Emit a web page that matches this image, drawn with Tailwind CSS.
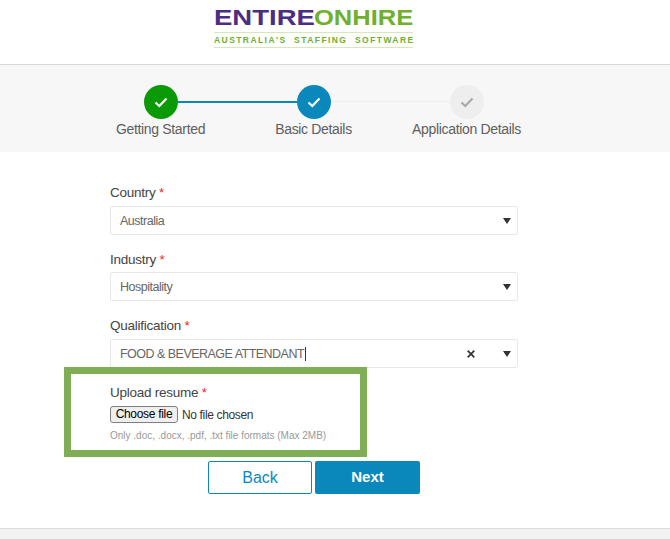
<!DOCTYPE html>
<html><head><meta charset="utf-8"><script src="https://cdn.jsdelivr.net/npm/@tailwindcss/browser@4"></script></head>
<body class="bg-white font-['Liberation_Sans',Arial,sans-serif] text-[#444]">
<div class="relative w-[670px] h-[539px] overflow-hidden flex flex-col">
  <header class="h-[65px] shrink-0 border-b border-[#d9d9d9] flex justify-center pr-[43px]">
    <div class="w-[199px] mt-[10px] flex flex-col items-stretch">
      <div class="h-[16px] flex leading-[16px] text-[22px] font-bold whitespace-nowrap"><span class="w-[100px] text-[#4b2d83] inline-block origin-left scale-x-[1.25]">ENTIRE</span><span class="text-[#6fb02c] inline-block origin-left scale-x-[1.16]">ONHIRE</span></div>
      <div class="mt-[6px] h-[16px] border-y border-[#d5e9bb] text-[#6fb02c] text-[8.5px] leading-[14px] font-bold tracking-[1.43px] whitespace-nowrap text-center">AUSTRALIA'S&nbsp; STAFFING&nbsp; SOFTWARE</div>
    </div>
  </header>
  <section class="h-[87px] shrink-0 bg-[#f7f7f7] pt-[20px] pl-[84px]">
    <div class="flex w-[459px]">
      <div class="w-[153px] flex flex-col items-center relative">
        <div class="absolute left-[76px] top-[16px] w-[153px] h-[2px] bg-[#0a88bc]"></div>
        <div class="relative size-[34px] rounded-full bg-[#0a9a06] flex items-center justify-center">
          <svg class="size-[14px]" viewBox="0 0 14 14" fill="none" stroke="#fff" stroke-width="2.2"><path d="M1.5 7.5 5.3 11 12.5 3.5"/></svg>
        </div>
        <div class="text-[14px] tracking-[-0.33px] leading-[20px] text-[#5e5e5e] whitespace-nowrap">Getting Started</div>
      </div>
      <div class="w-[153px] flex flex-col items-center relative">
        <div class="absolute left-[76px] top-[16px] w-[153px] h-[1px] bg-[#eeeeee]"></div>
        <div class="relative size-[34px] rounded-full bg-[#0a88bc] flex items-center justify-center">
          <svg class="size-[14px]" viewBox="0 0 14 14" fill="none" stroke="#fff" stroke-width="2.2"><path d="M1.5 7.5 5.3 11 12.5 3.5"/></svg>
        </div>
        <div class="text-[14px] tracking-[-0.33px] leading-[20px] text-[#5e5e5e] whitespace-nowrap">Basic Details</div>
      </div>
      <div class="w-[153px] flex flex-col items-center relative">
        <div class="relative size-[34px] rounded-full bg-[#eeeeee] flex items-center justify-center">
          <svg class="size-[14px]" viewBox="0 0 14 14" fill="none" stroke="#aaa" stroke-width="2.2"><path d="M1.5 7.5 5.3 11 12.5 3.5"/></svg>
        </div>
        <div class="text-[14px] tracking-[-0.33px] leading-[20px] text-[#5e5e5e] whitespace-nowrap">Application Details</div>
      </div>
    </div>
  </section>
  <main class="flex-1 pl-[110px] pt-[32px]">
    <div class="w-[408px] flex flex-col">
      <label class="text-[13.5px] tracking-[-0.25px] leading-[18px] text-[#444]">Country <span class="text-[#e8262a]">*</span></label>
      <div class="mt-[4px] h-[29px] border border-[#e8e8e8] rounded-[2px] flex items-center pl-[9px] pr-[6px] text-[12.5px] tracking-[-0.5px] text-[#666]">
        <span class="flex-1 pt-[1px]">Australia</span>
        <svg class="w-[8px] h-[6px]" viewBox="0 0 8 6" fill="#333"><path d="M0 0h8L4 6z"/></svg>
      </div>
      <label class="mt-[16px] text-[13.5px] tracking-[-0.25px] leading-[18px] text-[#444]">Industry <span class="text-[#e8262a]">*</span></label>
      <div class="mt-[3px] h-[29px] border border-[#e8e8e8] rounded-[2px] flex items-center pl-[9px] pr-[6px] text-[12.5px] tracking-[-0.5px] text-[#666]">
        <span class="flex-1 pt-[1px]">Hospitality</span>
        <svg class="w-[8px] h-[6px]" viewBox="0 0 8 6" fill="#333"><path d="M0 0h8L4 6z"/></svg>
      </div>
      <label class="mt-[16px] text-[13.5px] tracking-[-0.25px] leading-[18px] text-[#444]">Qualification <span class="text-[#e8262a]">*</span></label>
      <div class="mt-[4px] h-[29px] border border-[#e8e8e8] rounded-[2px] flex items-center pl-[9px] pr-[6px] text-[12.5px] tracking-[-0.52px] text-[#666]">
        <span class="flex-1 pt-[1px]"><span class="border-r border-[#333] pr-[0.5px]">FOOD &amp; BEVERAGE ATTENDANT</span></span>
        <svg class="w-[8px] h-[8px] mr-[28px]" viewBox="0 0 8 8" fill="none" stroke="#333" stroke-width="1.7"><path d="M.7.7l6.6 6.6M7.3.7.7 7.3"/></svg>
        <svg class="w-[8px] h-[6px]" viewBox="0 0 8 6" fill="#333"><path d="M0 0h8L4 6z"/></svg>
      </div>
      <label class="mt-[16px] text-[13.5px] tracking-[-0.25px] leading-[18px] text-[#444]">Upload resume <span class="text-[#e8262a]">*</span></label>
      <div class="mt-[4px] flex items-center h-[17px] text-[12px] tracking-[-0.35px] text-[#333]">
        <button class="w-[68px] h-[17px] bg-[#efefef] border border-[#808080] rounded-[3px] text-[12px] tracking-[-0.3px] leading-[15px] text-black">Choose file</button>
        <span class="ml-[4px]">No file chosen</span>
      </div>
      <p class="mt-[6px] text-[10px] leading-[14px] text-[#999]">Only .doc, .docx, .pdf, .txt file formats (Max 2MB)</p>
      <div class="mt-[18px] ml-[98px] flex gap-[3px]">
        <button class="w-[104px] h-[33px] bg-white border border-[#0a88bc] rounded-[2px] text-[16px] text-[#0a88bc]">Back</button>
        <button class="w-[105px] h-[33px] bg-[#0a88bc] rounded-[2px] text-[15px] font-bold text-white">Next</button>
      </div>
    </div>
  </main>
  <footer class="h-[11px] shrink-0 bg-[#f2f2f2] border-t border-[#dcdcdc]"></footer>
  <div class="absolute left-[64px] top-[367px] w-[303px] h-[90px] border-[7px] border-[#7fae56]"></div>
</div>
</body></html>
